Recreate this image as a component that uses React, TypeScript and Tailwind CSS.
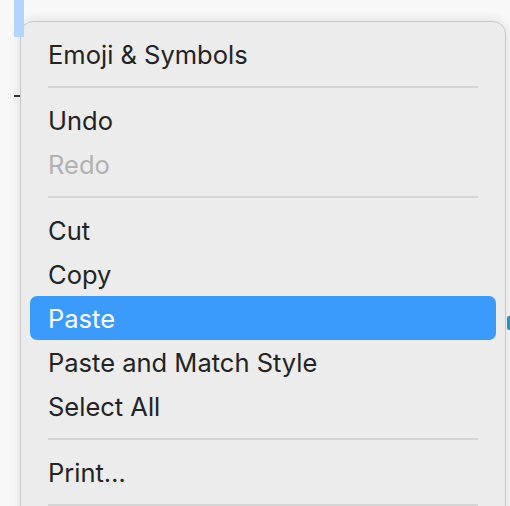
import React from 'react';

type Entry =
  | { kind: 'item'; label: string; disabled?: boolean; active?: boolean }
  | { kind: 'sep' };

const entries: Entry[] = [
  { kind: 'item', label: 'Emoji & Symbols' },
  { kind: 'sep' },
  { kind: 'item', label: 'Undo' },
  { kind: 'item', label: 'Redo', disabled: true },
  { kind: 'sep' },
  { kind: 'item', label: 'Cut' },
  { kind: 'item', label: 'Copy' },
  { kind: 'item', label: 'Paste', active: true },
  { kind: 'item', label: 'Paste and Match Style' },
  { kind: 'item', label: 'Select All' },
  { kind: 'sep' },
  { kind: 'item', label: 'Print…' },
  { kind: 'sep' },
];

export default function App() {
  return (
    <div
      className="relative h-[506px] w-[510px] overflow-hidden bg-[#f8f8f8]"
      style={{ fontFamily: 'Inter, "Noto Sans", sans-serif' }}
    >
      {/* editor behind the menu */}
      <div className="absolute left-[14px] top-0 h-[37px] w-[10px] bg-[#b3d4fb]" />
      <div className="absolute left-[14px] top-[95px] h-[2px] w-[6px] bg-[#333]" />
      <div className="absolute left-[507px] top-[316px] h-[14px] w-[3px] rounded-l-[2px] bg-[#2a8fc9]" />

      <div className="pl-[20px] pt-[21px]">
        <div className="w-[486px] rounded-t-[13px] border border-[#c9c9c9] bg-[#ececec] px-[9px] pt-[10px] shadow-[0_0_12px_rgba(0,0,0,0.12)]">
          {entries.map((e, i) =>
            e.kind === 'sep' ? (
              <div key={i} className="flex h-[22px] items-center px-[18px]">
                <div className="h-[2px] w-full bg-[#d5d5d5]" />
              </div>
            ) : (
              <div
                key={i}
                className={`flex h-[44px] items-center rounded-[7px] px-[18px] pt-[2px] text-[25.5px] ${
                  e.active
                    ? 'bg-[#3a9bfd] text-white'
                    : e.disabled
                    ? 'text-[#b1b1b1]'
                    : 'text-[#232323]'
                }`}
              >
                {e.label}
              </div>
            )
          )}
        </div>
      </div>
    </div>
  );
}
